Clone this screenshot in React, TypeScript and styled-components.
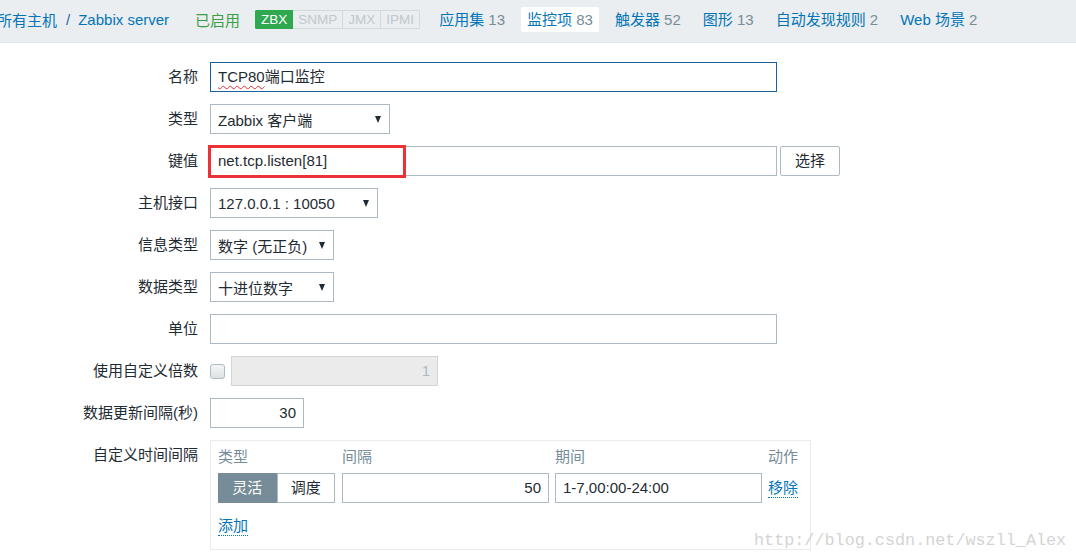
import React from 'react';
import styled, { createGlobalStyle } from 'styled-components';

const Global = createGlobalStyle`
  html, body { margin: 0; padding: 0; background: #fff; }
  body {
    font-family: "Liberation Sans", Arial, "Noto Sans CJK SC", sans-serif;
    font-size: 15px;
    color: #1f2c33;
  }
  * { box-sizing: border-box; }
`;

const Page = styled.div`
  position: relative;
  width: 1076px;
  height: 559px;
  overflow: hidden;
`;

const Header = styled.nav`
  display: flex;
  align-items: center;
  height: 43px;
  padding-bottom: 3px;
  background: #ebeef0;
  border-bottom: 1px solid #e1e6e9;
  white-space: nowrap;
`;

const Breadcrumbs = styled.div`
  display: flex;
  align-items: center;
  margin-left: -3px;
`;

const Link = styled.span`
  color: #0275b8;
`;

const Sep = styled.span`
  color: #1f65a6;
  padding: 0 8px 0 9px;
`;

const Status = styled.span`
  color: #3d9f45;
  margin-left: 26px;
`;

const Badges = styled.div`
  display: flex;
  margin-left: 15px;
  border-radius: 2px;
  overflow: hidden;
`;

const Badge = styled.span<{ $on?: boolean }>`
  height: 19px;
  line-height: 17px;
  padding: 0 5px;
  font-size: 13.5px;
  border: 1px solid ${p => (p.$on ? '#2fa84f' : '#d3d9dc')};
  border-left-width: ${p => (p.$on ? '1px' : '0')};
  background: ${p => (p.$on ? '#2fa84f' : '#ebeef0')};
  color: ${p => (p.$on ? '#fff' : '#bfc8cc')};
`;

const Tabs = styled.div`
  display: flex;
  gap: 10px;
  margin-left: 13px;
`;

const Tab = styled.span<{ $active?: boolean }>`
  height: 25px;
  line-height: 25px;
  padding: 0 6px;
  border-radius: 2px;
  background: ${p => (p.$active ? '#fff' : 'transparent')};
  color: #0275b8;
`;

const Count = styled.span`
  color: #768d99;
`;

const Form = styled.div`
  display: grid;
  grid-template-columns: 198px 1fr;
  column-gap: 12px;
  row-gap: 12px;
  padding-top: 19px;
  align-items: start;
  justify-items: start;
`;

const Label = styled.div`
  justify-self: end;
  line-height: 30px;
  white-space: nowrap;
  color: #1f2c33;
`;

const Control = styled.div`
  display: flex;
  align-items: center;
  gap: 3px;
`;

const Input = styled.div<{ $w: number; $align?: 'left' | 'right'; $focused?: boolean; $disabled?: boolean }>`
  width: ${p => p.$w}px;
  height: 30px;
  border: 1px solid ${p => (p.$focused ? '#1b6199' : p.$disabled ? '#d2d6d8' : '#acbbc2')};
  background: ${p => (p.$disabled ? '#ebebeb' : '#fff')};
  color: ${p => (p.$disabled ? '#acbbc2' : '#1f2c33')};
  padding: 0 7px;
  line-height: 28px;
  text-align: ${p => p.$align ?? 'left'};
  white-space: nowrap;
  overflow: hidden;
`;

const Misspelled = styled.span`
  text-decoration: underline wavy #e0302f;
  text-decoration-skip-ink: none;
  text-underline-offset: 3px;
  text-decoration-thickness: 1px;
`;

const Select = styled.div<{ $w: number }>`
  width: ${p => p.$w}px;
  height: 30px;
  border: 1px solid #acbbc2;
  background: #fff;
  display: flex;
  align-items: center;
  justify-content: space-between;
  padding: 0 8px 0 7px;
  white-space: nowrap;
  &::after {
    content: '';
    border-left: 3.5px solid transparent;
    border-right: 3.5px solid transparent;
    border-top: 7px solid #1f2c33;
  }
`;

const Annotated = styled.div`
  position: relative;
`;

const RedMark = styled.div`
  position: absolute;
  left: -2px;
  top: -1px;
  width: 198px;
  height: 33px;
  border: 3px solid #ec3237;
  pointer-events: none;
`;

const Button = styled.div`
  width: 60px;
  height: 30px;
  border: 1px solid #acbbc2;
  border-radius: 2px;
  background: #fff;
  line-height: 28px;
  text-align: center;
  color: #1f2c33;
`;

const CheckRow = styled.div`
  display: flex;
  align-items: center;
  gap: 6px;
`;

const Checkbox = styled.span`
  width: 15px;
  height: 15px;
  border: 1px solid #acbbc2;
  border-radius: 3px;
  background: linear-gradient(#f4f5f6, #dde1e3);
`;

const IntervalBox = styled.div`
  width: 601px;
  border: 1px solid #e8ecee;
  padding: 7px 7px 13px;
`;

const IntervalGrid = styled.div`
  display: grid;
  grid-template-columns: 117px 206px 206px auto;
  column-gap: 7px;
  row-gap: 7px;
  align-items: center;
`;

const ColHead = styled.div`
  color: #768d99;
  line-height: 18px;
`;

const Segmented = styled.div`
  display: flex;
  width: 117px;
`;

const SegButton = styled.div<{ $active?: boolean }>`
  flex: 1;
  height: 30px;
  line-height: 28px;
  text-align: center;
  border: 1px solid ${p => (p.$active ? '#768d99' : '#acbbc2')};
  background: ${p => (p.$active ? '#768d99' : '#fff')};
  color: ${p => (p.$active ? '#fff' : '#1f2c33')};
`;

const ActionLink = styled.span`
  display: inline-block;
  line-height: 19px;
  color: #0275b8;
  border-bottom: 1px dotted #0275b8;
`;

const AddRow = styled.div`
  margin-top: 13px;
`;

const Watermark = styled.div`
  position: absolute;
  left: 754px;
  top: 532px;
  font-family: "Liberation Mono", "DejaVu Sans Mono", monospace;
  font-size: 16.8px;
  line-height: 17px;
  color: #d4d4d4;
  white-space: nowrap;
  pointer-events: none;
`;

const navItems: { name: string; count: string; active?: boolean }[] = [
  { name: '应用集', count: '13' },
  { name: '监控项', count: '83', active: true },
  { name: '触发器', count: '52' },
  { name: '图形', count: '13' },
  { name: '自动发现规则', count: '2' },
  { name: 'Web 场景', count: '2' },
];

export default function App() {
  return (
    <Page>
      <Global />
      <Header>
        <Breadcrumbs>
          <Link>所有主机</Link>
          <Sep>/</Sep>
          <Link>Zabbix server</Link>
        </Breadcrumbs>
        <Status>已启用</Status>
        <Badges>
          <Badge $on>ZBX</Badge>
          <Badge>SNMP</Badge>
          <Badge>JMX</Badge>
          <Badge>IPMI</Badge>
        </Badges>
        <Tabs>
          {navItems.map(n => (
            <Tab key={n.name} $active={n.active}>
              {n.name} <Count>{n.count}</Count>
            </Tab>
          ))}
        </Tabs>
      </Header>

      <Form>
        <Label>名称</Label>
        <Input $w={567} $focused>
          <Misspelled>TCP80</Misspelled>端口监控
        </Input>

        <Label>类型</Label>
        <Select $w={180}>Zabbix 客户端</Select>

        <Label>键值</Label>
        <Control>
          <Annotated>
            <Input $w={567}>net.tcp.listen[81]</Input>
            <RedMark />
          </Annotated>
          <Button>选择</Button>
        </Control>

        <Label>主机接口</Label>
        <Select $w={168}>127.0.0.1 : 10050</Select>

        <Label>信息类型</Label>
        <Select $w={124}>数字 (无正负)</Select>

        <Label>数据类型</Label>
        <Select $w={124}>十进位数字</Select>

        <Label>单位</Label>
        <Input $w={567} />

        <Label>使用自定义倍数</Label>
        <CheckRow>
          <Checkbox />
          <Input $w={207} $align="right" $disabled>1</Input>
        </CheckRow>

        <Label>数据更新间隔(秒)</Label>
        <Input $w={94} $align="right">30</Input>

        <Label>自定义时间间隔</Label>
        <IntervalBox>
          <IntervalGrid>
            <ColHead>类型</ColHead>
            <ColHead>间隔</ColHead>
            <ColHead>期间</ColHead>
            <ColHead>动作</ColHead>
            <Segmented>
              <SegButton $active>灵活</SegButton>
              <SegButton>调度</SegButton>
            </Segmented>
            <Input $w={207} $align="right">50</Input>
            <Input $w={207}>1-7,00:00-24:00</Input>
            <div>
              <ActionLink>移除</ActionLink>
            </div>
          </IntervalGrid>
          <AddRow>
            <ActionLink>添加</ActionLink>
          </AddRow>
        </IntervalBox>
      </Form>
      <Watermark>http://blog.csdn.net/wszll_Alex</Watermark>
    </Page>
  );
}
